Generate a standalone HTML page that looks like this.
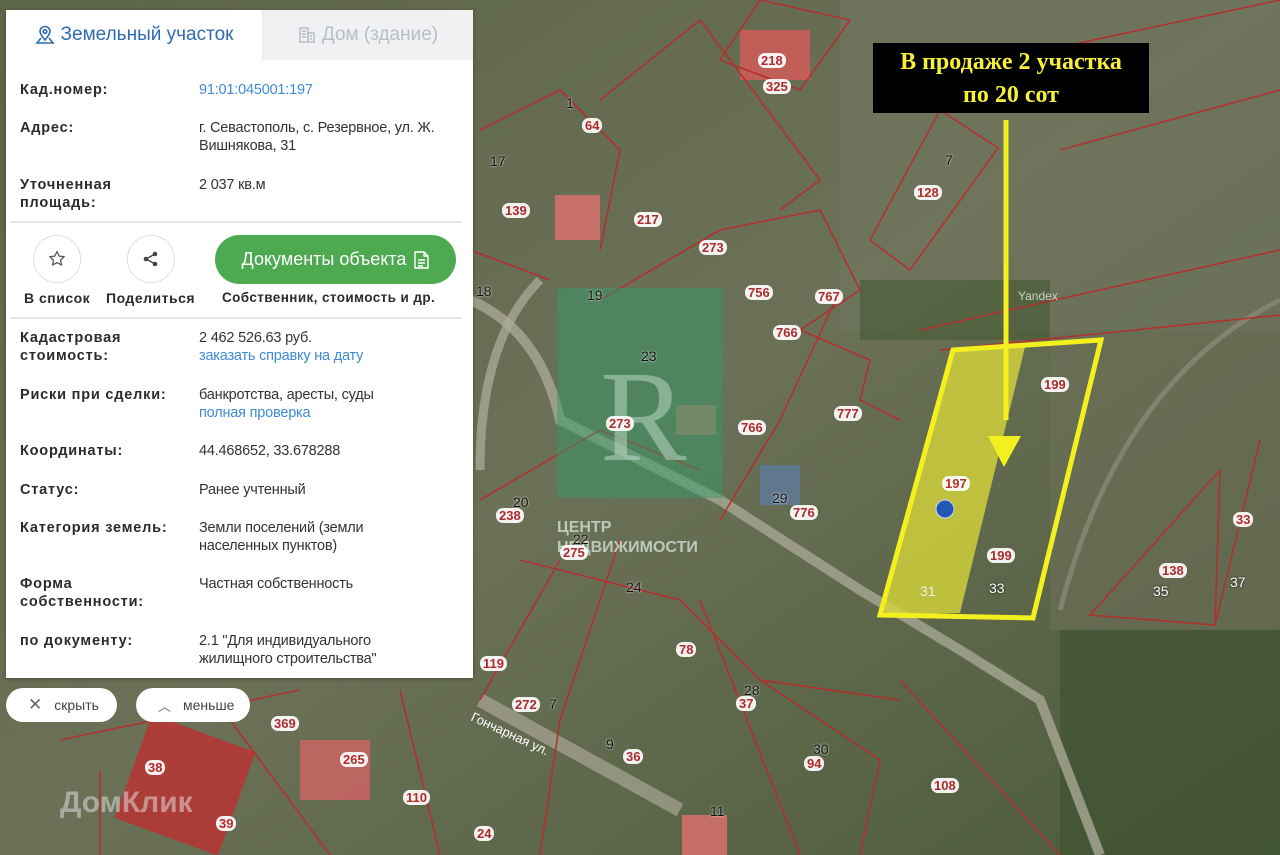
<!DOCTYPE html>
<html><head><meta charset="utf-8"><style>
*{margin:0;padding:0;box-sizing:border-box}
body{width:1280px;height:855px;overflow:hidden;position:relative;font-family:"Liberation Sans","DejaVu Sans",sans-serif;background:#626b52}
.map{position:absolute;left:0;top:0}
.lb{position:absolute;font-size:13px;color:#b3262b;background:#fff;border-radius:7px;padding:0 3px;line-height:15px;font-weight:bold;opacity:.92}
.nb{position:absolute;font-size:14px;color:#111;text-shadow:0 0 2px #fff}
.panel{position:absolute;left:6px;top:10px;width:467px;height:668px;background:#fff;box-shadow:0 1px 4px rgba(0,0,0,.3)}
.tab1{position:absolute;left:0;top:0;width:256px;height:50px;color:#2f6bb0;font-size:19px;display:flex;align-items:center;justify-content:center;gap:6px}
.tab2{position:absolute;left:256px;top:0;width:211px;height:50px;background:#eff1f3;color:#b9bec4;font-size:19px;display:flex;align-items:center;justify-content:center;gap:6px;border-left:1px solid #e3e6e9}
.row{position:absolute;left:14px;font-size:14.5px;line-height:18px}
.row .k{position:absolute;left:0;top:0;width:175px;font-weight:bold;letter-spacing:.8px;color:#2b2b2b;white-space:nowrap}
.row .v{position:absolute;left:179px;top:0;color:#333;white-space:nowrap;letter-spacing:-.2px}
.a,.row .v.a{color:#3d8ad6}
.hr{position:absolute;left:4px;width:452px;height:2px;background:#e5e8eb}
.circ{position:absolute;width:48px;height:48px;border:1px solid #dde0e3;border-radius:50%;display:flex;align-items:center;justify-content:center}
.cap{position:absolute;top:280px;font-size:14px;font-weight:bold;letter-spacing:.5px;color:#2b2b2b}
.btn{position:absolute;left:209px;top:225px;width:241px;height:49px;background:#4eaa50;border-radius:25px;color:#fff;font-size:18px;display:flex;align-items:center;justify-content:center;gap:8px}
.pill{position:absolute;top:688px;height:34px;background:#fff;border-radius:17px;font-size:14px;color:#444;display:flex;align-items:center;gap:12px;padding-left:22px}
.banner{position:absolute;left:873px;top:43px;width:276px;height:70px;background:#000;color:#f6f03a;font-family:"Liberation Serif",serif;font-weight:bold;font-size:24px;text-align:center;line-height:33px;padding-top:3px}
</style></head><body>
<svg class="map" width="1280" height="855">
<defs><linearGradient id="g" x1="0" y1="0" x2="1" y2="1"><stop offset="0" stop-color="#5d6549"/><stop offset=".5" stop-color="#6b7157"/><stop offset="1" stop-color="#4c5a3a"/></linearGradient></defs>
<rect width="1280" height="855" fill="url(#g)"/>
<rect x="840" y="0" width="440" height="330" fill="#727660" opacity=".6"/>
<rect x="1050" y="330" width="230" height="300" fill="#6d7059" opacity=".6"/>
<rect x="1060" y="630" width="220" height="225" fill="#3f5230" opacity=".7"/>
<rect x="860" y="280" width="190" height="60" fill="#455a34" opacity=".6"/>
<path d="M470 300 Q540 330 560 420 L720 500 L860 590 L960 650 L1040 700 L1100 855" stroke="#a9a795" stroke-width="10" fill="none" opacity=".8"/>
<path d="M540 280 Q480 340 480 470" stroke="#b0ae9c" stroke-width="9" fill="none" opacity=".7"/>
<path d="M1060 610 Q1120 380 1280 300" stroke="#8a8a74" stroke-width="5" fill="none" opacity=".8"/>
<path d="M480 700 L680 810" stroke="#a9a795" stroke-width="14" fill="none" opacity=".7"/>
<rect x="130" y="730" width="110" height="110" fill="#b83434" opacity=".85" transform="rotate(20 185 785)"/>
<rect x="740" y="30" width="70" height="50" fill="#d85a5a" opacity=".8"/>
<rect x="555" y="195" width="45" height="45" fill="#e07070" opacity=".8"/>
<rect x="300" y="740" width="70" height="60" fill="#d26464" opacity=".8"/>
<rect x="682" y="815" width="45" height="40" fill="#e07070" opacity=".8"/>
<rect x="676" y="405" width="40" height="30" fill="#a87a62"/>
<rect x="760" y="465" width="40" height="40" fill="#5f7a9e" opacity=".8"/>
<g stroke="#b92b2b" stroke-width="1.6" fill="none" opacity=".9">
<path d="M870 240 L940 110 L998 148 L910 270 Z"/>
<path d="M760 0 L850 20 L800 90 L720 60 Z"/>
<path d="M480 130 L560 90 L620 150 L600 250"/>
<path d="M600 100 L700 20 L820 180 L780 210"/>
<path d="M720 230 L820 210 L860 290 L800 330"/>
<path d="M840 290 L780 420 L720 520"/>
<path d="M800 330 L870 360 L860 400 L900 420"/>
<path d="M940 350 L1280 315"/><path d="M920 330 L1280 250"/>
<path d="M1000 60 L1280 0"/><path d="M1060 150 L1280 90"/>
<path d="M1090 615 L1220 470 L1215 625 Z"/><path d="M1215 625 L1260 440"/>
<path d="M480 500 L600 430 L700 470"/><path d="M520 560 L680 600 L760 680 L880 760 L860 855"/>
<path d="M560 560 L480 700"/><path d="M620 540 L560 720 L540 855"/>
<path d="M700 600 L800 855"/><path d="M60 740 L300 690"/><path d="M100 770 L100 855"/>
<path d="M230 720 L330 855"/><path d="M400 690 L440 855"/><path d="M900 680 L1060 855"/>
<path d="M760 680 L900 700"/><path d="M470 250 L550 280"/><path d="M600 300 L720 230"/>
</g>
<rect x="557" y="288" width="166" height="210" fill="#2f9d6a" opacity=".45"/>
<text x="600" y="460" font-family="Liberation Serif" font-size="130" fill="#cfe8d8" opacity=".45">R</text>
<polygon points="953,350 1025,347 960,613 880,615" fill="#d8d83a" opacity=".78"/>
<polygon points="953,350 1101,340 1033,618 880,615" fill="none" stroke="#f4f020" stroke-width="5"/>
<line x1="1006" y1="120" x2="1006" y2="420" stroke="#f4f020" stroke-width="5"/>
<polygon points="988,436 1021,436 1004,467" fill="#f4f020"/>
<circle cx="945" cy="509" r="9" fill="#2357b4" stroke="#cfd8ff" stroke-width="1"/>
<text x="1018" y="300" font-size="12" fill="#cfd0c4">Yandex</text>
<text x="557" y="532" font-size="16" fill="#d8e8dc" opacity=".75" font-weight="bold">ЦЕНТР</text>
<text x="557" y="552" font-size="16" fill="#d8e8dc" opacity=".75" font-weight="bold">НЕДВИЖИМОСТИ</text>
<text x="60" y="812" font-size="30" fill="#e6e6e6" opacity=".5" font-weight="bold">ДомКлик</text>
<text x="470" y="720" font-size="13" fill="#fff" transform="rotate(25 470 720)">Гончарная ул.</text>
</svg>
<span class="lb" style="left:758px;top:53px">218</span><span class="lb" style="left:763px;top:79px">325</span>
<span class="lb" style="left:582px;top:118px">64</span><span class="lb" style="left:914px;top:185px">128</span>
<span class="lb" style="left:502px;top:203px">139</span><span class="lb" style="left:634px;top:212px">217</span>
<span class="lb" style="left:699px;top:240px">273</span><span class="lb" style="left:745px;top:285px">756</span>
<span class="lb" style="left:815px;top:289px">767</span><span class="lb" style="left:773px;top:325px">766</span>
<span class="lb" style="left:834px;top:406px">777</span><span class="lb" style="left:738px;top:420px">766</span>
<span class="lb" style="left:790px;top:505px">776</span><span class="lb" style="left:1041px;top:377px">199</span>
<span class="lb" style="left:942px;top:476px">197</span><span class="lb" style="left:987px;top:548px">199</span>
<span class="lb" style="left:1159px;top:563px">138</span><span class="lb" style="left:1233px;top:512px">33</span>
<span class="lb" style="left:496px;top:508px">238</span><span class="lb" style="left:560px;top:545px">275</span>
<span class="lb" style="left:676px;top:642px">78</span><span class="lb" style="left:736px;top:696px">37</span>
<span class="lb" style="left:271px;top:716px">369</span><span class="lb" style="left:340px;top:752px">265</span>
<span class="lb" style="left:403px;top:790px">110</span><span class="lb" style="left:623px;top:749px">36</span>
<span class="lb" style="left:804px;top:756px">94</span><span class="lb" style="left:931px;top:778px">108</span>
<span class="lb" style="left:480px;top:656px">119</span><span class="lb" style="left:512px;top:697px">272</span>
<span class="lb" style="left:145px;top:760px">38</span><span class="lb" style="left:216px;top:816px">39</span>
<span class="lb" style="left:474px;top:826px">24</span><span class="lb" style="left:606px;top:416px">273</span>
<span class="nb" style="left:566px;top:95px">1</span><span class="nb" style="left:490px;top:153px">17</span>
<span class="nb" style="left:945px;top:152px">7</span><span class="nb" style="left:476px;top:283px">18</span>
<span class="nb" style="left:587px;top:287px">19</span><span class="nb" style="left:641px;top:348px">23</span>
<span class="nb" style="left:513px;top:494px">20</span><span class="nb" style="left:573px;top:531px">22</span>
<span class="nb" style="left:626px;top:579px">24</span><span class="nb" style="left:772px;top:490px">29</span>
<span class="nb" style="left:920px;top:583px;color:#eee;text-shadow:none">31</span><span class="nb" style="left:989px;top:580px;color:#fff;text-shadow:0 0 2px #000">33</span>
<span class="nb" style="left:1153px;top:583px;color:#fff;text-shadow:0 0 2px #000">35</span><span class="nb" style="left:1230px;top:574px;color:#fff;text-shadow:0 0 2px #000">37</span>
<span class="nb" style="left:744px;top:682px">28</span><span class="nb" style="left:813px;top:741px">30</span>
<span class="nb" style="left:549px;top:696px">7</span><span class="nb" style="left:606px;top:736px">9</span>
<span class="nb" style="left:710px;top:803px">11</span>

<div class="banner">В продаже 2 участка<br>по 20 сот</div>

<div class="panel">
<div class="tab1"><svg width="20" height="20" viewBox="0 0 20 20" fill="none" stroke="#2f6bb0" stroke-width="1.6"><path d="M10 15 C6 10 5 8 5 6.5 A5 5 0 0 1 15 6.5 C15 8 14 10 10 15Z"/><circle cx="10" cy="6.5" r="1.8"/><path d="M6 13 L2 18 H18 L14 13"/></svg>Земельный участок</div>
<div class="tab2"><svg width="18" height="18" viewBox="0 0 18 18" fill="none" stroke="#b9bec4" stroke-width="1.5"><rect x="2" y="2" width="8" height="14"/><rect x="10" y="7" width="6" height="9"/><path d="M4 5h4M4 8h4M4 11h4M12 10h2M12 13h2"/></svg>Дом (здание)</div>
<div class="row" style="top:71px"><div class="k">Кад.номер:</div><div class="v a">91:01:045001:197</div></div>
<div class="row" style="top:109px"><div class="k">Адрес:</div><div class="v">г. Севастополь, с. Резервное, ул. Ж.<br>Вишнякова, 31</div></div>
<div class="row" style="top:166px"><div class="k">Уточненная<br>площадь:</div><div class="v">2 037 кв.м</div></div>
<div class="hr" style="top:211px"></div>
<div class="circ" style="left:27px;top:225px"><svg width="20" height="20" viewBox="0 0 20 20"><path d="M10 2.5l2.2 4.6 5 .6-3.7 3.4 1 5-4.5-2.5-4.5 2.5 1-5L2.8 7.7l5-.6z" fill="none" stroke="#555" stroke-width="1.3" stroke-linejoin="round"/></svg></div>
<div class="circ" style="left:121px;top:225px"><svg width="18" height="18" viewBox="0 0 18 18" fill="#444"><circle cx="13" cy="4" r="2.3"/><circle cx="4" cy="9" r="2.3"/><circle cx="13" cy="14" r="2.3"/><path d="M4 9L13 4M4 9L13 14" stroke="#444" stroke-width="1.4"/></svg></div>
<div class="cap" style="left:18px">В список</div>
<div class="cap" style="left:100px">Поделиться</div>
<div class="cap" style="left:216px;font-size:13.5px;letter-spacing:.4px">Собственник, стоимость и др.</div>
<div class="btn">Документы объекта <svg width="15" height="18" viewBox="0 0 15 18" fill="none" stroke="#fff" stroke-width="1.4"><path d="M1 1h9l4 4v12H1z"/><path d="M10 1v4h4M4 9h7M4 12h7M4 15h5"/></svg></div>
<div class="hr" style="top:307px"></div>
<div class="row" style="top:319px"><div class="k">Кадастровая<br>стоимость:</div><div class="v">2 462 526.63 руб.<br><span class="a">заказать справку на дату</span></div></div>
<div class="row" style="top:376px"><div class="k">Риски при сделки:</div><div class="v">банкротства, аресты, суды<br><span class="a">полная проверка</span></div></div>
<div class="row" style="top:432px"><div class="k">Координаты:</div><div class="v">44.468652, 33.678288</div></div>
<div class="row" style="top:471px"><div class="k">Статус:</div><div class="v">Ранее учтенный</div></div>
<div class="row" style="top:509px"><div class="k">Категория земель:</div><div class="v">Земли поселений (земли<br>населенных пунктов)</div></div>
<div class="row" style="top:565px"><div class="k">Форма<br>собственности:</div><div class="v">Частная собственность</div></div>
<div class="row" style="top:622px"><div class="k">по документу:</div><div class="v">2.1 "Для индивидуального<br>жилищного строительства"</div></div>
</div>
<div class="pill" style="left:6px;width:111px"><span style="font-size:17px;color:#666">✕</span>скрыть</div>
<div class="pill" style="left:136px;width:114px"><span style="font-size:13px;color:#666">︿</span>меньше</div>
</body></html>
